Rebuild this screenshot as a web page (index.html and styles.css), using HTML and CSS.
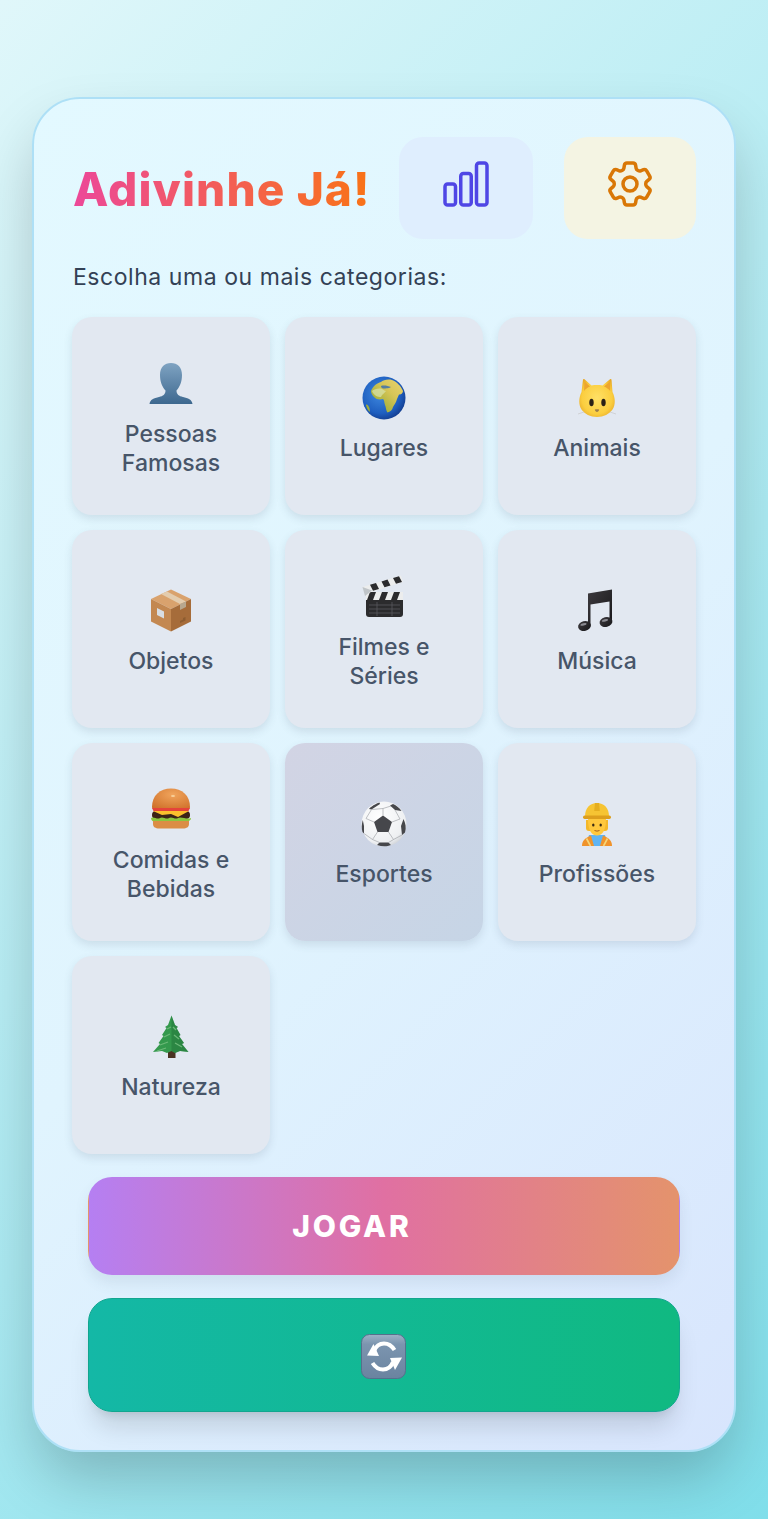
FILE: index.html
```html
<!DOCTYPE html>
<html lang="pt-BR">
<head>
<meta charset="utf-8">
<title>Adivinhe Já!</title>
<link rel="stylesheet" href="styles.css">
</head>
<body>
<main class="card">
  <header class="header">
    <h1 class="title">Adivinhe Já!</h1>
    <div class="actions">
      <button class="icon-btn stats-btn" aria-label="Estatísticas">
        <svg class="hero" viewBox="0 0 24 24" fill="none" stroke="currentColor" stroke-width="1.5"><path stroke-linecap="round" stroke-linejoin="round" d="M3 13.125C3 12.504 3.504 12 4.125 12h2.25c.621 0 1.125.504 1.125 1.125v6.75C7.5 20.496 6.996 21 6.375 21h-2.25A1.125 1.125 0 013 19.875v-6.75zM9.750 8.625c0-.621.504-1.125 1.125-1.125h2.250c.621 0 1.125.504 1.125 1.125v11.250c0 .621-.504 1.125-1.125 1.125h-2.250a1.125 1.125 0 01-1.125-1.125V8.625zM16.500 4.125c0-.621.504-1.125 1.125-1.125h2.250C20.496 3 21 3.504 21 4.125v15.750c0 .621-.504 1.125-1.125 1.125h-2.250a1.125 1.125 0 01-1.125-1.125V4.125z"/></svg>
      </button>
      <button class="icon-btn gear-btn" aria-label="Configurações">
        <svg class="hero" viewBox="0 0 24 24" fill="none" stroke="currentColor" stroke-width="1.5"><path stroke-linecap="round" stroke-linejoin="round" d="M9.594 3.94c.09-.542.56-.94 1.11-.94h2.593c.55 0 1.02.398 1.11.94l.213 1.281c.063.374.313.686.645.87.074.04.147.083.22.127.324.196.72.257 1.075.124l1.217-.456a1.125 1.125 0 011.37.49l1.296 2.247a1.125 1.125 0 01-.26 1.431l-1.003.827c-.293.24-.438.613-.431.992a6.759 6.759 0 010 .255c-.007.378.138.75.43.99l1.005.828c.424.35.534.954.26 1.43l-1.298 2.247a1.125 1.125 0 01-1.369.491l-1.217-.456c-.355-.133-.75-.072-1.076.124a6.57 6.57 0 01-.22.128c-.331.183-.581.495-.644.869l-.213 1.28c-.09.543-.56.941-1.11.941h-2.594c-.55 0-1.02-.398-1.11-.94l-.213-1.281c-.062-.374-.312-.686-.644-.87a6.52 6.52 0 01-.22-.127c-.325-.196-.72-.257-1.076-.124l-1.217.456a1.125 1.125 0 01-1.369-.49l-1.297-2.247a1.125 1.125 0 01.26-1.431l1.004-.827c.292-.24.437-.613.43-.992a6.932 6.932 0 010-.255c.007-.378-.138-.75-.43-.99l-1.004-.828a1.125 1.125 0 01-.26-1.43l1.297-2.247a1.125 1.125 0 011.37-.491l1.216.456c.356.133.751.072 1.076-.124.072-.044.146-.087.22-.128.332-.183.582-.495.644-.869l.214-1.281z"/><path stroke-linecap="round" stroke-linejoin="round" d="M15 12a3 3 0 11-6 0 3 3 0 016 0z"/></svg>
      </button>
    </div>
  </header>

  <p class="subtitle">Escolha uma ou mais categorias:</p>

  <div class="grid">
    <button class="cat">
      <svg class="emoji" viewBox="0 0 44 44"><defs><linearGradient id="b1" x1="0" y1="0" x2="0" y2="1"><stop offset="0" stop-color="#7fa3c2"/><stop offset="1" stop-color="#3d688f"/></linearGradient></defs><path fill="url(#b1)" d="M0.5 42C1 37.500 5 36 10 35C14 34 16.500 32.500 16.500 28.500C13.500 25.500 11 20 11 13C11 5 15.500 1 22 1C28.500 1 33 5 33 13C33 20 30.500 25.500 27.500 28.500C27.500 32.500 30 34 34 35C39 36 43 37.500 43.500 42Z"/></svg>
      <span class="cat-label">Pessoas Famosas</span>
    </button>
    <button class="cat">
      <svg class="emoji" viewBox="0 0 44 44"><defs><radialGradient id="g1" cx=".42" cy=".4" r=".65"><stop offset="0" stop-color="#3f8ae0"/><stop offset=".7" stop-color="#1f5fc0"/><stop offset="1" stop-color="#123a8c"/></radialGradient><linearGradient id="g2" x1=".2" y1=".8" x2=".9" y2=".1"><stop offset="0" stop-color="#9fae3a"/><stop offset=".6" stop-color="#d8c658"/><stop offset="1" stop-color="#e3cf6a"/></linearGradient></defs><circle cx="22" cy="22" r="21.500" fill="url(#g1)"/><path fill="url(#g2)" d="M9 15C11 10 15 7 19 6C21 4 26 3 30 4C35 6 39 10 41 15C41 17 39 19 37 18.500L35 23C34 27 32 29 31 31C30.500 34 28 36 25.500 36.500C24 35 24 31 23 29C22 26 22.500 24 21 23C18 24 14 23.500 12 21C10 19 9 17 9 15Z"/><path fill="#d7e2a8" d="M10 15C12 13 17 12 20 13C22 14 23 15 24 15C23 17 20 18 19 21C16 21 12 20 10 15Z" opacity=".75"/><path fill="#1f5fc0" d="M19 10C22 9 26 10 29 11C28 12 24 12.500 21 12.500C19.500 12 19 11 19 10Z" opacity=".7"/><path fill="#9fae3a" d="M4 29C5 28 6 29 7 31C8 33 8 35 7.500 36C6 34 4.500 32 4 29Z"/></svg>
      <span class="cat-label">Lugares</span>
    </button>
    <button class="cat">
      <svg class="emoji" viewBox="0 0 44 44"><defs><radialGradient id="c1" cx=".5" cy=".5" r=".6"><stop offset="0" stop-color="#ffe066"/><stop offset=".7" stop-color="#fbce3f"/><stop offset="1" stop-color="#e7a928"/></radialGradient></defs><path fill="url(#c1)" d="M8 3.500C8.300 2.800 9 2.800 9.500 3.300L16.500 9.500C20 8.900 24 8.900 27.500 9.500L35 3.300C35.500 2.800 36.200 2.800 36.500 3.500L37.500 16C40.500 22 40.500 29 37.500 33.500C34.500 38 28.500 41 22 41C15.500 41 9.500 38 6.500 33.500C3.500 29 3.500 22 6.500 16Z"/><path fill="#eda52e" d="M9.500 5.500L15 10.500C12.500 11.500 10.500 13 9 15Z M35 5.500L29 10.500C31.500 11.500 33.500 13 35.200 15Z"/><ellipse cx="16.500" cy="26.500" rx="2.200" ry="3.800" fill="#2a2116"/><ellipse cx="28.500" cy="26.500" rx="2.200" ry="3.800" fill="#2a2116"/><path fill="#9d7f4a" d="M19.800 33.500C20.500 33 23.500 33 24.200 33.500C24 35 23 36 22 36C21 36 20 35 19.800 33.500Z"/><path d="M3 38L9 36M41 38L35 36" stroke="#c9c9c9" stroke-width=".7" fill="none"/></svg>
      <span class="cat-label">Animais</span>
    </button>

    <button class="cat">
      <svg class="emoji" viewBox="0 0 44 44"><path fill="#d9a26d" d="M22 0.500L42 10L22 20L2 10Z"/><path fill="#c38851" d="M2 10L22 20V42.500L2 32.500Z"/><path fill="#a66c3a" d="M42 10L22 20V42.500L42 32.500Z"/><path fill="#e3ccae" d="M12 5L31 15L37 12.500L18 2.500Z"/><path fill="#b7a78f" d="M31 15L37 12.500V18L31 21Z"/><path fill="#d8dee3" d="M8 19L15 22.500V29.500L8 26Z"/><path fill="#8d5c30" d="M31 32L34 30.500V29L36.500 28V31.500L31 34Z"/></svg>
      <span class="cat-label">Objetos</span>
    </button>
    <button class="cat">
      <svg class="emoji" viewBox="0 0 44 44"><rect x="4" y="17" width="37" height="25" rx="3" fill="#2b2b2d"/><rect x="4" y="17" width="37" height="8" fill="#eceded"/><path fill="#2b2b2d" d="M8 17H14L11 25H5Z M20 17H26L23 25H17Z M32 17H38L35 25H29Z"/><path d="M7 30H38M7 34H38M7 38H38M15 27V41M30 27V41" stroke="#58595d" stroke-width=".8"/><path fill="#eceded" d="M0.500 12L39 0.500L41 7L3 19Z"/><path fill="#2b2b2d" d="M8 9.800L14 8L17 14L11 15.800Z M19.500 6.400L25.500 4.600L28.500 10.500L22.500 12.300Z M31 3L37 1.200L40 7L34 8.800Z"/><path fill="#bfc4c8" d="M0.500 12L10 15.500L3 21Z"/></svg>
      <span class="cat-label">Filmes e Séries</span>
    </button>
    <button class="cat">
      <svg class="emoji" viewBox="0 0 44 44"><defs><linearGradient id="m1" x1="0" y1="0" x2="1" y2="1"><stop offset="0" stop-color="#3d3a3e"/><stop offset="1" stop-color="#17171a"/></linearGradient></defs><path fill="url(#m1)" d="M13 4.500L37 0.500V33H34.500V12.500L15.500 15.500V37H13Z"/><ellipse cx="9.500" cy="37" rx="6.500" ry="4.800" transform="rotate(-14 9.500 37)" fill="url(#m1)"/><ellipse cx="31" cy="33" rx="6.500" ry="4.800" transform="rotate(-14 31 33)" fill="url(#m1)"/><ellipse cx="8.500" cy="35.400" rx="3.200" ry="1.200" transform="rotate(-14 8.500 35.400)" fill="#8b8b92"/><ellipse cx="30" cy="31.400" rx="3.200" ry="1.200" transform="rotate(-14 30 31.400)" fill="#8b8b92"/></svg>
      <span class="cat-label">Música</span>
    </button>

    <button class="cat">
      <svg class="emoji" viewBox="0 0 44 44"><defs><radialGradient id="h1" cx=".55" cy=".3" r=".8"><stop offset="0" stop-color="#f0a45c"/><stop offset="1" stop-color="#cf7029"/></radialGradient></defs><path fill="url(#h1)" d="M3 19C3 7.500 11 0.500 22 0.500C33 0.500 41 7.500 41 19C41 20.500 40 21 38.500 21H5.500C4 21 3 20.500 3 19Z"/><path fill="#e5433a" d="M3 20H41L39 24H5Z"/><rect x="3" y="23" width="38" height="8" rx="4" fill="#3c2316"/><path fill="#fbc02d" d="M4 23H40L29 29L22 26L13 27Z"/><path fill="#8bc53f" d="M2 30C5 28 8 32 11 30C14 28 17 32 20 30C23 28 26 32 29 30C32 28 38 32 42 30C42 33 38 34 35 33.500C30 35 26 33.500 22 34C17 35 12 33 8 34C5 34.500 2 33 2 30Z"/><path fill="#db8d45" d="M4 33H40V36C40 39 37.500 40.500 34 40.500H10C6.500 40.500 4 39 4 36Z"/><ellipse cx="24" cy="8" rx="2" ry="1" fill="#f8d09a"/></svg>
      <span class="cat-label">Comidas e Bebidas</span>
    </button>
    <button class="cat is-selected">
      <svg class="emoji" viewBox="0 0 44 44"><defs><radialGradient id="s1" cx=".4" cy=".35" r=".75"><stop offset="0" stop-color="#ffffff"/><stop offset=".75" stop-color="#eef0f2"/><stop offset="1" stop-color="#c3c7cd"/></radialGradient></defs><circle cx="22" cy="22" r="22.500" fill="url(#s1)"/><path fill="#46474b" d="M21 13.500L30 20L26.500 30H15.500L12 20Z M13 2.500C14.500 1.500 16 1 17.500 .5L18 2L9.500 7.500L7 7C8.500 5 11 3.500 13 2.500Z M31 2C34.500 3.500 37.500 6 39.500 9L33 8L28 3.500Z M41.500 17C43.500 21 44.500 26 43 30.500L40 33L39 24Z M.8 18C-.5 22 -.5 27 .5 30L2 31.500L2 24Z M15 43C20 44.800 25 44.800 29 43L26.500 40.500H17.500Z"/><path d="M21 13.500V6.500M30 20L38 17M26.500 30L31.500 37.500M15.500 30L10.500 37.500M12 20L4 16.500M10 7.500L21 6.500L29 4M33 8L38 17M40 33L31.500 37.500L26.500 40.500M2 31.500L10.500 37.500L17.500 40.500M9.500 7.500L4 16.500" stroke="#a3a6ab" stroke-width=".7" fill="none"/></svg>
      <span class="cat-label">Esportes</span>
    </button>
    <button class="cat">
      <svg class="emoji" viewBox="0 0 44 44"><path fill="#5fb4f2" d="M14 33H30L33 44H11Z"/><path fill="#f0932b" d="M7 44C7 38.500 10 36 16 33.500L19 44Z M37 44C37 38.500 34 36 28 33.500L25 44Z"/><path d="M11.500 36.500L15.500 44M32.500 36.500L28.500 44" stroke="#f5d67a" stroke-width="1.600"/><path fill="#f4b82a" d="M11 18H33V26C33 28 32 29 30 29H14C12 29 11 28 11 26Z"/><path fill="#ffc83d" d="M13 17C13 28 16.500 33.500 22 33.500C27.500 33.500 31 28 31 17Z"/><ellipse cx="18.300" cy="23" rx="1.200" ry="1.600" fill="#3a2a14"/><ellipse cx="25.700" cy="23" rx="1.200" ry="1.600" fill="#3a2a14"/><path d="M19.500 28.500Q22 29.800 24.500 28.500" stroke="#a4601c" stroke-width="1" fill="none"/><path fill="#f6c433" d="M10 14.500C10 6 15 1 22 1C29 1 34 6 34 14.500Z"/><path fill="#e5ae20" d="M20 1H24L24.800 9H19.200Z"/><rect x="8" y="13.500" width="28" height="3.500" rx="1.700" fill="#dd9f1d"/></svg>
      <span class="cat-label">Profissões</span>
    </button>

    <button class="cat">
      <svg class="emoji" viewBox="0 0 44 44"><rect x="19" y="34" width="7.500" height="9" fill="#4a3322"/><path fill="#34994d" d="M22.500 0.500L26 10L29 12L27.500 13L31.500 20L30 21L35 28L33 29L39.500 37L31 36L26 38L22.500 36L18 38L13 36L4 37L11 29L9.500 28L14.500 21L13 20L17.500 13L16 12L19 10Z"/><path fill="#1f6a35" d="M22.500 0.500L26 10L29 12L27.500 13L31.500 20L30 21L35 28L33 29L39.500 37L31 36L26 38L22.500 36Z" opacity=".4"/><path d="M18 14L22 12M15 22L21 19M11 30L19 27M8 36L17 33M27 15L24 12M30 24L25 20M33 32L26 28" stroke="#6bb877" stroke-width="1.300" fill="none"/></svg>
      <span class="cat-label">Natureza</span>
    </button>
  </div>

  <div class="footer-actions">
    <button class="play-btn">JOGAR</button>
    <button class="reset-btn" aria-label="Reiniciar">
      <svg class="reset-icon" viewBox="0 0 45 45"><defs><linearGradient id="r1" x1="0" y1="0" x2="0" y2="1"><stop offset="0" stop-color="#9db1c6"/><stop offset=".22" stop-color="#7c95af"/><stop offset="1" stop-color="#6a83a0"/></linearGradient></defs><rect x=".5" y=".5" width="44" height="44" rx="8" fill="url(#r1)" stroke="#56708c"/><path d="M13 17C15 12 19 9.500 23 9.500C27.500 9.500 31 12 33.500 16" stroke="#fff" stroke-width="4" fill="none"/><path d="M32 28C30 33 26 35.500 22 35.500C17.500 35.500 14 33 11.500 29" stroke="#fff" stroke-width="4" fill="none"/><path fill="#fff" d="M6 21.500L18 22L12.500 10Z"/><path fill="#fff" d="M41 23.500L29 24L34 36Z"/></svg>
    </button>
  </div>
</main>
</body>
</html>
```
FILE: styles.css
```css
* { box-sizing: border-box; }

html, body { margin: 0; height: 100%; }

body {
  min-height: 1519px;
  padding: 97px 32px 0;
  background: linear-gradient(135deg, #e0f7fa 0%, #80deea 100%);
  font-family: "Inter", "Liberation Sans", sans-serif;
  overflow: hidden;
}

button { font: inherit; cursor: pointer; }

.card {
  width: 704px;
  height: 1355px;
  padding: 38px;
  border: 2px solid #aee0f6;
  border-radius: 48px;
  background: linear-gradient(135deg, #e3f9ff 0%, #e0f4fe 50%, #d8e5fd 100%);
  box-shadow: 0 30px 60px -6px rgba(0, 0, 0, .22);
}

.header {
  display: flex;
  align-items: center;
  justify-content: space-between;
  height: 102px;
}

.title {
  margin: 3px 0 0 1px;
  font-size: 46px;
  font-weight: 800;
  letter-spacing: 1.1px;
  line-height: 1.2;
  white-space: nowrap;
  color: transparent;
  background: linear-gradient(90deg, #ec4899, #f97316);
  -webkit-background-clip: text;
  background-clip: text;
}

.actions {
  display: flex;
  gap: 31px;
  height: 100%;
}

.icon-btn {
  display: flex;
  align-items: center;
  justify-content: center;
  padding: 0 0 8px;
  border: 0;
  border-radius: 24px;
}

.stats-btn { width: 134px; background: #dfeefe; color: #4f46e5; }
.gear-btn  { width: 132px; background: #f4f4e3; color: #d97706; }

.hero { width: 56px; height: 56px; display: block; }

.subtitle {
  margin: 23px 0 25px 1px;
  font-size: 23px;
  letter-spacing: .55px;
  line-height: 30px;
  color: #334155;
}

.grid {
  display: grid;
  grid-template-columns: repeat(3, 198px);
  grid-auto-rows: 198px;
  gap: 15px;
}

.cat {
  display: flex;
  flex-direction: column;
  align-items: center;
  justify-content: center;
  padding: 0 24px;
  border: 0;
  border-radius: 20px;
  background: #e2e8f1;
  box-shadow: 0 4px 8px rgba(71, 85, 105, .14);
  color: #475569;
}

.is-selected {
  background: linear-gradient(135deg, #d2d4e4 0%, #c6d5e6 100%);
}

.emoji {
  display: block;
  width: 44px;
  height: 44px;
  margin: 7px 0 14px;
  overflow: visible;
}

.cat-label {
  font-size: 23px;
  font-weight: 550;
  line-height: 29px;
  text-align: center;
}

.footer-actions {
  display: flex;
  flex-direction: column;
  gap: 23px;
  margin: 23px 16px 0;
}

.play-btn {
  height: 98px;
  padding: 0 64px 0 0;
  border: 1px solid transparent;
  border-radius: 24px;
  background: linear-gradient(90deg, #b57ff2 0%, #e070a2 50%, #e4936c 100%);
  box-shadow: 0 8px 14px rgba(71, 85, 105, .1);
  color: #fff;
  font-size: 30px;
  font-weight: 800;
  letter-spacing: 2.8px;
}

.reset-btn {
  display: flex;
  align-items: center;
  justify-content: center;
  height: 114px;
  padding: 3px 2px 0 0;
  border: 1px solid #12a68f;
  border-radius: 24px;
  background: linear-gradient(90deg, #14b8a6, #10b981);
  box-shadow: 0 20px 25px -5px rgba(0, 0, 0, .12), 0 8px 10px -6px rgba(0, 0, 0, .1);
}

.reset-icon { width: 45px; height: 45px; display: block; }
```
